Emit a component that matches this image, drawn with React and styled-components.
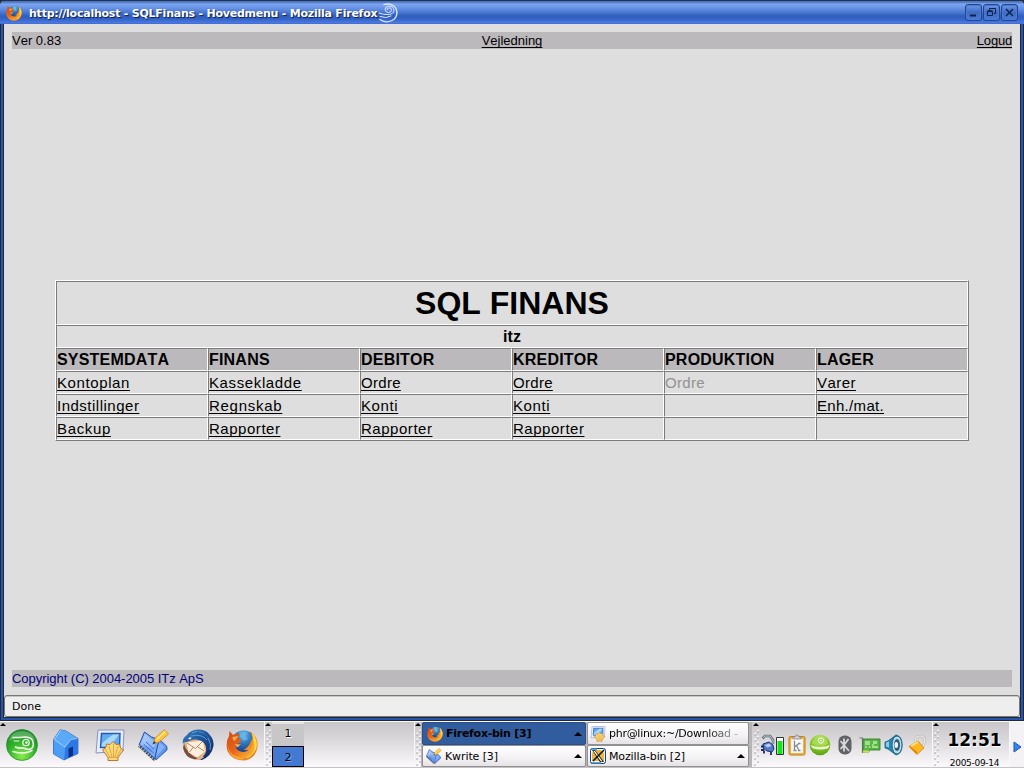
import React from 'react';
import styled, { createGlobalStyle, css } from 'styled-components';

const Global = createGlobalStyle`
  * { box-sizing: border-box; }
  body { margin: 0; background: #222; overflow: hidden; }
`;
const Desktop = styled.div`
  width: 1024px; height: 768px; display: flex; flex-direction: column;
  font-family: "DejaVu Sans", sans-serif; font-size: 11px; color: #000;
`;
const Window = styled.div`
  height: 721px; display: flex; flex-direction: column; background: #26272b;
`;
const TitleBar = styled.div`
  height: 24px; flex: none; display: flex; align-items: center; padding: 2px 6px 0 6px;
  border-radius: 5px 5px 0 0;
  background: linear-gradient(#23304e 0 1px, #4a74bd 1px 2px, #7ca6f0 4px, #6893e6 8px, #4573ce 13px, #2f5fbd 16px, #3563c5 19px, #4c7ae6 23px, #3a66c4 24px);
`;
const Title = styled.div`
  margin-left: 7px; margin-right: 1px; padding-top: 1px; color: #fff; font-weight: bold; font-size: 11px; line-height: 20px; white-space: pre;
  letter-spacing: ${p => p.$ls}px; text-shadow: 1px 1px 1px #0b1c4c;
`;
const Buttons = styled.div`margin-left: auto; display: flex; gap: 1px;`;
const WinButton = styled.div`
  width: 17px; height: 17px; margin-top: -2px; border: 1px solid #24458c; border-radius: 3px;
  background: linear-gradient(#6d97e6, #3d6cc4 50%, #4a7ad8);
  box-shadow: inset 0 0 0 1px #4c7bd4;
  display: flex; align-items: center; justify-content: center;
`;
const Frame = styled.div`
  flex: 1; display: flex; flex-direction: column; padding: 0 3px 3px;
  border: solid #26282e; border-width: 0 1px 1px; background: #2555b2;
`;
const Inner = styled.div`
  flex: 1; display: flex; flex-direction: column; background: #dedede;
  border: solid #26282e; border-width: 0 1px 1px; margin: 0 -1px -1px;
`;
const Page = styled.div`
  height: 671px; display: flex; flex-direction: column; padding: 8px;
  font-family: "Liberation Sans", Arial, sans-serif; font-kerning: none;
`;
const Bar = styled.div`
  height: 17px; width: 1000px; background: #bcb9bc; display: grid; grid-template-columns: 1fr 1fr 1fr;
  font-size: 13px; line-height: 17px; color: ${p => p.$color || '#000'};
`;
const BarCell = styled.div`text-align: ${p => p.$align || 'left'}; white-space: nowrap; letter-spacing: ${p => p.$ls || 0}px;`;
const Link = styled.a`
  text-decoration: underline; text-decoration-thickness: 1px; text-underline-offset: 2px;
  text-decoration-skip-ink: none; cursor: pointer;
`;
const Middle = styled.div`flex: 1; display: flex; padding: 231px 0 0 43px;`;
const Table = styled.div`
  width: 914px; height: 161px; flex: none; border: 1px solid; border-color: #fff #7b7b7b #7b7b7b #fff;
  display: grid; grid-template-columns: repeat(6, 152px); grid-template-rows: 44px repeat(5, 23px);
`;
const Cell = styled.div`
  border: 1px solid; border-color: #7b7b7b #fff #fff #7b7b7b; font-size: 15px; line-height: 22px;
  white-space: nowrap; letter-spacing: ${p => p.$ls || 0}px; color: ${p => p.$muted ? '#929292' : '#000'};
  ${p => p.$head && css`background: #bcb9bc; font-size: 16px; line-height: 21px; font-weight: bold; letter-spacing: 0.2px;`}
  ${p => p.$wide && css`grid-column: 1 / -1; text-align: center; font-size: 16px; line-height: 21px; font-weight: bold;`}
  ${p => p.$title && css`font-size: 32px; line-height: 42px;`}
`;
const Status = styled.div`
  height: 22px; border: 1px solid #77786f; border-radius: 3px; background: #eee;
  padding: 1px 0 0 7px; line-height: 20px; box-shadow: inset 0 1px 0 #c6c6c6;
`;
const Taskbar = styled.div`
  height: 47px; display: flex; border-top: 1px solid #f9f9f9; border-bottom: 1px solid #c4c4c4; background: #efedef;
`;
const metal = 'linear-gradient(#c9c6c9, #d8d5d8 35%, #ece9ec 70%, #fbf9fb)';
const Panel = styled.div`
  width: ${p => p.$w}px; background: ${metal}; display: flex; align-items: center; flex: none;
  border-right: ${p => p.$edge ? '1px solid #f8f8f8' : '0'};
`;
const Launchers = styled(Panel)`gap: 12px; padding-left: 6px;`;
const Tray = styled(Panel)`gap: 3px;`;
const Grip = styled.div`
  width: ${p => p.$w || 7}px; flex: none; background: ${metal}; display: flex; flex-direction: column; align-items: center;
`;
const CornerGrip = styled(Grip)`margin-right: -7px; background: none; z-index: 1; height: 5px; overflow: hidden;`;
const Pager = styled.div`width: 32px; flex: none; display: flex; flex-direction: column; padding-top: 2px; background: #e5e2e5;`;
const Desk = styled.div`
  height: ${p => p.$on ? 21 : 22}px; text-align: center; line-height: ${p => p.$on ? 21 : 20}px; background: ${p => p.$on ? '#4379d0' : '#c8c7c8'};
  border: ${p => p.$on ? '1px solid #000' : '0'}; text-shadow: 1px 1px 0 ${p => p.$on ? '#7ba3e5' : '#fff'};
`;
const Tasks = styled.div`
  width: 331px; flex: none; display: grid; grid-template-columns: 164px 162px; grid-template-rows: 23px 22px; column-gap: 1px; padding-left: 1px; background: #b6b4b6;
`;
const Task = styled.div`
  display: flex; align-items: center; gap: 3px; padding: 0 3px 0 ${p => p.$pl || 4}px; border: 1px solid ${p => p.$on ? '#28508c' : '#929092'};
  border-radius: 2px; overflow: hidden; white-space: nowrap;
  background: ${p => p.$on ? '#315d9f' : 'linear-gradient(#fff, #f5f3f5 55%, #e6e3e6)'};
  font-weight: ${p => p.$on ? 'bold' : 'normal'};
`;
const TaskText = styled.div`
  flex: 1; letter-spacing: ${p => p.$ls || 0}px; line-height: 18px; padding-top: ${p => p.$drop ? 2 : 0}px;
  ${p => p.$fade && css`mask-image: linear-gradient(90deg, #000 70%, rgba(0,0,0,.1) 100%);`}
`;
const Triangle = styled.div`border: solid transparent; border-width: 0 4px 4px; border-bottom-color: #000; width: 0; height: 0;`;
const Clock = styled(Panel)`flex-direction: column; justify-content: flex-start; padding: 8px 0 0 0;`;
const Time = styled.div`font-size: 17px; line-height: 20px; font-weight: bold; text-shadow: 1px 1px 1px #fff;`;
const DateText = styled.div`font-size: 9px; line-height: 12px; margin-top: 7px; letter-spacing: -0.3px;`;
const HideButton = styled.div`flex: 1; display: flex; align-items: center; justify-content: center; background: #f4f2f4; padding-top: 4px;`;

const Drawing = styled.svg`display: block; flex: none;`;
const Svg = ({ s = 32, w, h, vb = '0 0 32 32', children }) => (
  <Drawing width={w || s} height={h || s} viewBox={vb}>{children}</Drawing>
);
const Defs = styled.svg`position: absolute;`;

const Gradients = () => (
  <Defs width="0" height="0">
    <defs>
      <radialGradient id="green" cx=".5" cy=".85" r=".85"><stop offset="0" stopColor="#8bec4c" /><stop offset=".5" stopColor="#34b52b" /><stop offset="1" stopColor="#158324" /></radialGradient>
      <radialGradient id="lime" cx=".5" cy=".25" r=".8"><stop offset="0" stopColor="#d4f08a" /><stop offset=".5" stopColor="#86c828" /><stop offset="1" stopColor="#579b10" /></radialGradient>
      <linearGradient id="blue" x1="0" y1="0" x2="1" y2="1"><stop offset="0" stopColor="#9fd2ff" /><stop offset=".5" stopColor="#4b9cf4" /><stop offset="1" stopColor="#1c5fd0" /></linearGradient>
      <radialGradient id="globe" cx=".5" cy=".2" r=".8"><stop offset="0" stopColor="#5db4ea" /><stop offset=".5" stopColor="#2468b4" /><stop offset="1" stopColor="#152f78" /></radialGradient>
      <linearGradient id="fox" x1="0" y1="0" x2="1" y2="1"><stop offset="0" stopColor="#cf4a14" /><stop offset=".45" stopColor="#e9641a" /><stop offset=".7" stopColor="#f59a2c" /><stop offset="1" stopColor="#c84d10" /></linearGradient>
      <linearGradient id="gold" x1="0" y1="0" x2="1" y2="1"><stop offset="0" stopColor="#ffe88c" /><stop offset="1" stopColor="#f09c10" /></linearGradient>
      <linearGradient id="page" x1="0" y1="0" x2="1" y2="1"><stop offset="0" stopColor="#a8c9fa" /><stop offset=".5" stopColor="#6c9ff0" /><stop offset="1" stopColor="#8fbafa" /></linearGradient>
      <linearGradient id="bird" x1="0" y1="0" x2="1" y2="1"><stop offset="0" stopColor="#3d80bc" /><stop offset=".45" stopColor="#1d559c" /><stop offset="1" stopColor="#101f56" /></linearGradient>
    </defs>
  </Defs>
);

const Firefox = ({ s }) => (
  <Svg s={s}>
    <circle cx="17.500" cy="14" r="12.500" fill="url(#globe)" />
    <path d="M13 3q5-2 9 1l-3 3 3 3-4 2-4-4z" fill="#6abce9" opacity=".7" />
    <path d="M24 2.500q8 5 7.600 14.500Q30.500 29 19 31.500 6 32 1.500 22-.8 13 3 7l.5-5 3.500 4q4-2.500 7-1l-2 3.500 3.500 2.500-1 2.500-4 1.500q-2 3 1 6 6 4 11 0l-5 0q5-3 6.500-7l2-4q1-3-2.500-7.500z" fill="url(#fox)" />
    <path d="M25.500 3.500q6.500 6 5 15-2.500 9-11 11 6-5 7.500-12 1-8-1.500-14z" fill="#ffdb3d" />
    <path d="M27 10q4 10-2 16-4 3-8 3 8-5 9-11z" fill="#f7a82f" />
    <path d="M2 13q-1 8 5 13 6 4 13 2.500-7 3-13-1Q.5 22 2 13z" fill="#ffb132" />
    <path d="M6.500 8l6-1-4 5q-2-1-2-4z" fill="#f9ac46" />
    <path d="M9 15l6 .5-4 3z" fill="#f8b04a" />
  </Svg>
);
const Suse = () => (
  <Svg>
    <circle cx="16" cy="16" r="15.500" fill="url(#green)" stroke="#187f24" strokeWidth=".6" />
    <path d="M3 12Q5 2 16 2t13 10q-13-7-26 0z" fill="#fff" opacity=".25" />
    <g fill="none" stroke="#efffe9" strokeWidth="1.600" strokeLinecap="round">
      <path d="M7 8.500h7Q24 6.500 26.500 11.500q3 8-4 9-3-.5-5-1.500-5 .5-8-1" />
      <path d="M7 22.500q12 3.500 19-1" strokeWidth="1.500" />
      <path d="M8 12h5" strokeWidth="1" />
      <circle cx="20" cy="13.500" r="3.200" strokeWidth="1.300" />
    </g>
    <circle cx="20.500" cy="13.500" r="1.200" fill="#fff" />
  </Svg>
);
const Home = () => (
  <Svg>
    <path d="M3.500 10.500L10 .8 16 2l12 7.500v15L14 31 3.500 25z" fill="url(#blue)" stroke="#1d57b4" strokeWidth=".7" />
    <path d="M10 1l6 1.200L28 9.500 21 11l-6 8L3.500 10.500z" fill="#5ba9fa" />
    <path d="M15 19l6-8.500 7-1v15L14 31z" fill="#2d78e4" />
    <path d="M4 11l11 8-1 12-10-6z" fill="#4c9df6" />
    <path d="M18.500 19.500L23 17.500v9l-4.500 2z" fill="#0c2d8b" />
    <path d="M10.500 1.500l-6 9 10.500 7.500 6-7.500 6-1" stroke="#b5dcff" strokeWidth=".7" fill="none" />
  </Svg>
);
const ShellScreen = ({ s }) => (
  <Svg s={s}>
    <path d="M4 1h26l-1 21-27 2z" fill="#e9eeff" stroke="#8593c8" strokeWidth="1" />
    <path d="M7.500 4.500H26l-.5 14H6.500z" fill="#61acef" stroke="#2859b0" strokeWidth="1.400" />
    <path d="M8 14L19 5.500h6l-9 12H7.500z" fill="#bde2ff" opacity=".8" />
    <path d="M14 31.500v-3L8.500 21l3-2 1-4 3.500.5 3-3 3 3 3.500-.5 1 4 3 2-5.500 7.500v3z" fill="#fbd778" stroke="#a36510" strokeWidth=".8" />
    <path d="M16 28l-5-8M18 28l-3-11M19.500 28V15M21 28l3-11M23 28l4-8M14 28.500h11" stroke="#d1932f" strokeWidth=".7" fill="none" />
  </Svg>
);
const Notepad = ({ s }) => (
  <Svg s={s}>
    <path d="M16 9l5 1 8 7.500V21L18 31l-4-6z" fill="#5f95ee" stroke="#1c479e" strokeWidth=".8" />
    <path d="M20 12l7 6-9 10z" fill="#8db8fa" opacity=".8" />
    <path d="M1 16L6.500 3l7 5 8 3-2 6-3 13.500z" fill="url(#page)" stroke="#1f4daa" strokeWidth="1" />
    <path d="M3 15.500L7 5l6 5 6 2.500-4 7z" fill="#c3dafc" opacity=".5" />
    <path d="M8 13l8 7M5.500 15l10 9" stroke="#366cd0" strokeWidth="1" />
    <path d="M1 16.500l16 14.500" stroke="#2650aa" strokeWidth="3" /><path d="M1 17l16 14.500" stroke="#d3b65a" strokeWidth="2.600" strokeDasharray="1.200 1.700" />
    <path d="M15.500 14l1.500-5L26.500.7 30.500 5 20.500 13.500z" fill="#ffc438" stroke="#c98213" strokeWidth=".7" />
    <path d="M18.500 10.500L27.500 2.500" stroke="#ffec93" strokeWidth="1.500" /><path d="M14.500 15.500l1.500-3.500 2 2z" fill="#303640" />
  </Svg>
);
const Thunderbird = () => (
  <Svg>
    <path d="M2 13q2-5 8-6l12 1 5 8-2 11-7 4q-8 0-12-6-4-5-4-12z" fill="#e0b184" />
    <path d="M2 14q1 6 6 10 3 4 8 5l-3 1.500Q3 29 1 19z" fill="#7c4d3b" />
    <path d="M4.500 13.500L21 11.500l2 11-8 6-8.500-5z" fill="#feefdc" />
    <path d="M5 14l8.500 5.500L21 12M7.500 23l4-5M22 22l-6-4" fill="none" stroke="#a97b56" strokeWidth=".9" />
    <path d="M.8 15Q0 9 5 6q3-5 11-5.500 8 0 11 4.500 5 5 4.500 12-2 10-11.500 14l-2-.5 4-2-1-1q5-5 2.500-11-2-5-9-6-3-.5-6 1l-4 1.500Q2 12.500.8 15z" fill="url(#bird)" />
    <path d="M10 4q7-3.500 12 .5M9 7q11-2.500 16 4M26 9q4 6 2 12" fill="none" stroke="#5ba9dd" strokeWidth=".9" />
    <path d="M15 2.500q9 0 13 9" fill="none" stroke="#3273b3" strokeWidth=".9" />
    <path d="M6 9.500l2.500-1.500 1 1.500-2 1z" fill="#e8f3fb" />
  </Svg>
);
const Swirl = () => (
  <Svg w={20} h={20} vb="0 0 20 20">
    <g fill="none" stroke="#dce8ff" strokeLinecap="round">
      <path d="M6 1.500Q14-.5 18 5.500q3 8-4 12-7 3-12-1" strokeWidth="1.300" />
      <path d="M1 10q5 2 9 1.500 6-.5 6-4Q15.500 3 10.500 3 7 3.500 7 6.500q0 2.800 3.500 3 3-.2 3-2.700 0-2-2.500-2t-2 2" strokeWidth="1" />
      <path d="M2 13.500q6 2.500 11-.5" strokeWidth="1" />
    </g>
  </Svg>
);
const GripDots = () => (
  <Svg w={7} h={45} vb="0 0 7 45">
    <path d="M0 4l3-3 3 3z" fill="#000" />
    {[8, 14, 20, 26, 32, 38].map(y => <g key={y}>
      <path d={`M4 ${y + 1}h1v-1h1M1 ${y + 4}h1v-1h1`} stroke="#fff" fill="none" /><path d={`M4 ${y + 2}h2M1 ${y + 5}h2`} stroke="#aaa8aa" />
    </g>)}
  </Svg>
);
const MozillaX = () => (
  <Svg s={16} vb="0 0 16 16">
    <rect x=".5" y=".5" width="15" height="15" rx="2" fill="#f8f6e0" stroke="#123e83" />
    <path d="M2 13V5l3-3h6l3 3v8z" fill="#e8b643" />
    <path d="M2 2l3 0 9 12h-4z" fill="#111" /><path d="M3 2.500l2 .5 7.500 10.500-1.500 0z" fill="#fff" />
    <path d="M14 2L3 13" stroke="#111" strokeWidth="1.600" /><path d="M1 1h6M1 15h10" stroke="#3488ca" strokeWidth="1.500" />
  </Svg>
);
const Power = () => (
  <Svg w={24} h={22} vb="0 0 24 22">
    <path d="M1.500 4.500L4 2h5l3 4v4" fill="none" stroke="#66727f" strokeWidth="2.600" /><path d="M1.500 4.500L4 2h5l3 4v4" fill="none" stroke="#b4bfcb" strokeWidth="1" />
    <path d="M2 10l6-2 4 3 1 4-2 3-5-1-4-3z" fill="#5679c6" stroke="#1d3678" />
    <path d="M3.500 11l5-1.500 2 2.500-4 1.500z" fill="#bccdf4" /><path d="M3 16.500v3M10 18v3M0 12.500h3M0 16h3" stroke="#232a60" strokeWidth="1.800" />
    <path d="M15.500 3.500h7v17h-7z" fill="#fff" stroke="#30352f" strokeWidth="1" /><path d="M16.500 7h5v13h-5z" fill="#12e51c" />
  </Svg>
);
const Clipboard = () => (
  <Svg w={18} h={22} vb="0 0 18 22">
    <rect x="1" y="2.500" width="16" height="18.500" rx="1.500" fill="#f2b340" stroke="#c27d16" />
    <path d="M3 5h12v14H3z" fill="#f7f7f7" /><path d="M5 5V3h2l1-2h2l1 2h2v2z" fill="#ccd0d4" stroke="#8b8f94" strokeWidth=".8" />
    <path d="M6.500 7v9M6 7.500h1M5.500 16.500h3M7 12.500l4-3M8.500 11.500l2.500 5M10 9.500h2.500M10 16.500h2.500" fill="none" stroke="#858b94" strokeWidth="1.300" />
  </Svg>
);
const Watcher = () => (
  <Svg w={22} h={22} vb="0 0 22 22">
    <circle cx="11" cy="11" r="10.300" fill="url(#lime)" />
    <path d="M1 11q10 4 20 0l-2 3.500q-8 2-15 0z" fill="#edf9cd" />
    <path d="M3 10q8 3.500 16 0-2-8-8-8t-8 8z" fill="#a9d958" /><circle cx="12" cy="6.500" r="2.700" fill="none" stroke="#f7ffe8" strokeWidth="1" /><circle cx="12" cy="6.500" r=".8" fill="#fff" />
  </Svg>
);
const Bluetooth = () => (
  <Svg w={22} h={22} vb="0 0 16 22">
    <rect x="1.500" y="1.500" width="13" height="19" rx="6" fill="#606266" />
    <path d="M7 4.500v13M11.500 5L7 11l5 6M3.500 7L7 11l-3.500 4" fill="none" stroke="#d5d7da" strokeWidth="1.800" />
  </Svg>
);
const NetCard = () => (
  <Svg w={22} h={22} vb="0 0 22 22">
    <path d="M.5 4h3v15" fill="none" stroke="#777" strokeWidth="1.200" />
    <path d="M4 5h17v11H10v2H4z" fill="#58b846" stroke="#2c7127" strokeWidth=".8" />
    <path d="M6 7h5v4H6zM14 7h4v3h-4zM13 12h6v2h-6z" fill="#a4dd8c" /><path d="M6 13h2M9.500 13h2M13 11h2" fill="none" stroke="#e2f7cc" strokeWidth="1.200" /><path d="M4 17.500h6" stroke="#c7e04a" strokeWidth="2" />
  </Svg>
);
const Speaker = () => (
  <Svg w={20} h={22} vb="0 0 20 22">
    <path d="M1 8l3-1 8-6q6 1 6 10t-6 10l-8-6-3-1z" fill="#2785b4" stroke="#176080" strokeWidth=".8" />
    <ellipse cx="13" cy="11" rx="5" ry="9" fill="#b5ddea" stroke="#20678c" /><ellipse cx="13" cy="11" rx="3" ry="6" fill="#345b76" /><ellipse cx="12.300" cy="11" rx="1.800" ry="3" fill="#e5f5fa" />
    <path d="M2 8.500l3-1v6l-3-1z" fill="#8bcce5" />
  </Svg>
);
const Lock = () => (
  <Svg w={22} h={22} vb="0 0 20 22">
    <path d="M7 8Q7 2 12 2q5 0 5 5l-2 5" fill="none" stroke="#bbbab8" strokeWidth="2.600" /><path d="M7 8Q7 2 12 2q5 0 5 5l-2 5" fill="none" stroke="#efeeed" strokeWidth="1.200" />
    <path d="M1 12.500L10 7l6 7-7 6.500z" fill="#fbb822" stroke="#d28610" strokeWidth=".8" /><path d="M1 12.500l8 8v-2.500l-7-6z" fill="#e77e0a" /><path d="M3 12l7-4" stroke="#ffe384" strokeWidth="1.500" />
  </Svg>
);

const HEADS = ['SYSTEMDATA', 'FINANS', 'DEBITOR', 'KREDITOR', 'PRODUKTION', 'LAGER'];
const ROWS = [
  ['Kontoplan', 'Kassekladde', 'Ordre', 'Ordre', 'Ordre', 'Varer'],
  ['Indstillinger', 'Regnskab', 'Konti', 'Konti', '', 'Enh./mat.'],
  ['Backup', 'Rapporter', 'Rapporter', 'Rapporter', '', ''],
];
const TRACKING = {
  Kontoplan: 0.6, Kassekladde: 0.62, Ordre: 0.3, Varer: 0.45, Indstillinger: 0.5,
  Regnskab: 0.72, Konti: 0.6, 'Enh./mat.': 0.31, Backup: 0.65, Rapporter: 0.53,
};

export default function App() {
  return (
    <Desktop>
      <Global /><Gradients />
      <Window>
        <TitleBar>
          <Firefox s={16} />
          <Title $ls={-0.23}>http://localhost - SQLFinans - Hovedmenu - Mozilla Firefox</Title>
          <Swirl />
          <Buttons>
            <WinButton><Svg s={11} vb="0 0 11 11"><path d="M2 8.500h6" stroke="#10224d" strokeWidth="2" /></Svg></WinButton>
            <WinButton><Svg s={11} vb="0 0 11 11"><path d="M3.500 3V1.500h6v5H8M1.500 4.500h5v4h-5zM1.500 3.700h5" fill="none" stroke="#10224d" /></Svg></WinButton>
            <WinButton><Svg s={11} vb="0 0 11 11"><path d="M2 2l7 7M9 2L2 9" stroke="#10224d" strokeWidth="1.500" /></Svg></WinButton>
          </Buttons>
        </TitleBar>
        <Frame>
          <Inner>
            <Page>
              <Bar>
                <BarCell>Ver 0.83</BarCell>
                <BarCell $align="center"><Link>Vejledning</Link></BarCell>
                <BarCell $align="right" $ls={-0.2}><Link>Logud</Link></BarCell>
              </Bar>
              <Middle>
                <Table>
                  <Cell $wide $title>SQL FINANS</Cell>
                  <Cell $wide>itz</Cell>
                  {HEADS.map(h => <Cell $head key={h}>{h}</Cell>)}
                  {ROWS.map((row, r) => row.map((t, c) => (
                    <Cell key={`${r}-${c}`} $muted={c === 4} $ls={TRACKING[t]}>{c === 4 ? t : t && <Link>{t}</Link>}</Cell>
                  )))}
                </Table>
              </Middle>
              <Bar $color="#00007c"><BarCell $ls={-0.04}>Copyright (C) 2004-2005 ITz ApS</BarCell></Bar>
            </Page>
            <Status>Done</Status>
          </Inner>
        </Frame>
      </Window>
      <Taskbar>
        <CornerGrip><GripDots /></CornerGrip>
        <Launchers $w={265} $edge>
          <Suse /><Home /><ShellScreen /><Notepad /><Thunderbird /><Firefox s={32} />
        </Launchers>
        <Grip><GripDots /></Grip>
        <Pager><Desk>1</Desk><Desk $on>2</Desk></Pager>
        <Panel $w={111} $edge />
        <Grip $w={6}><GripDots /></Grip>
        <Tasks>
          <Task $on><Firefox s={16} /><TaskText $ls={-0.27}>Firefox-bin [3]</TaskText><Triangle /></Task>
          <Task $pl={2}><ShellScreen s={16} /><TaskText $fade $ls={-0.28}>phr@linux:~/Download -</TaskText></Task>
          <Task $pl={3}><Notepad s={16} /><TaskText $drop $ls={-0.1}>Kwrite [3]</TaskText><Triangle /></Task>
          <Task $pl={2}><MozillaX /><TaskText $drop $ls={-0.13}>Mozilla-bin [2]</TaskText><Triangle /></Task>
        </Tasks>
        <Grip $w={9}><GripDots /></Grip>
        <Tray $w={172} $edge><Power /><Clipboard /><Watcher /><Bluetooth /><NetCard /><Speaker /><Lock /></Tray>
        <Grip><GripDots /></Grip>
        <Clock $w={70} $edge><Time>12:51</Time><DateText>2005-09-14</DateText></Clock>
        <HideButton><Svg w={9} h={12} vb="0 0 9 12"><path d="M1 1l7 5-7 5z" fill="#3385ee" stroke="#1556b8" /></Svg></HideButton>
      </Taskbar>
    </Desktop>
  );
}
